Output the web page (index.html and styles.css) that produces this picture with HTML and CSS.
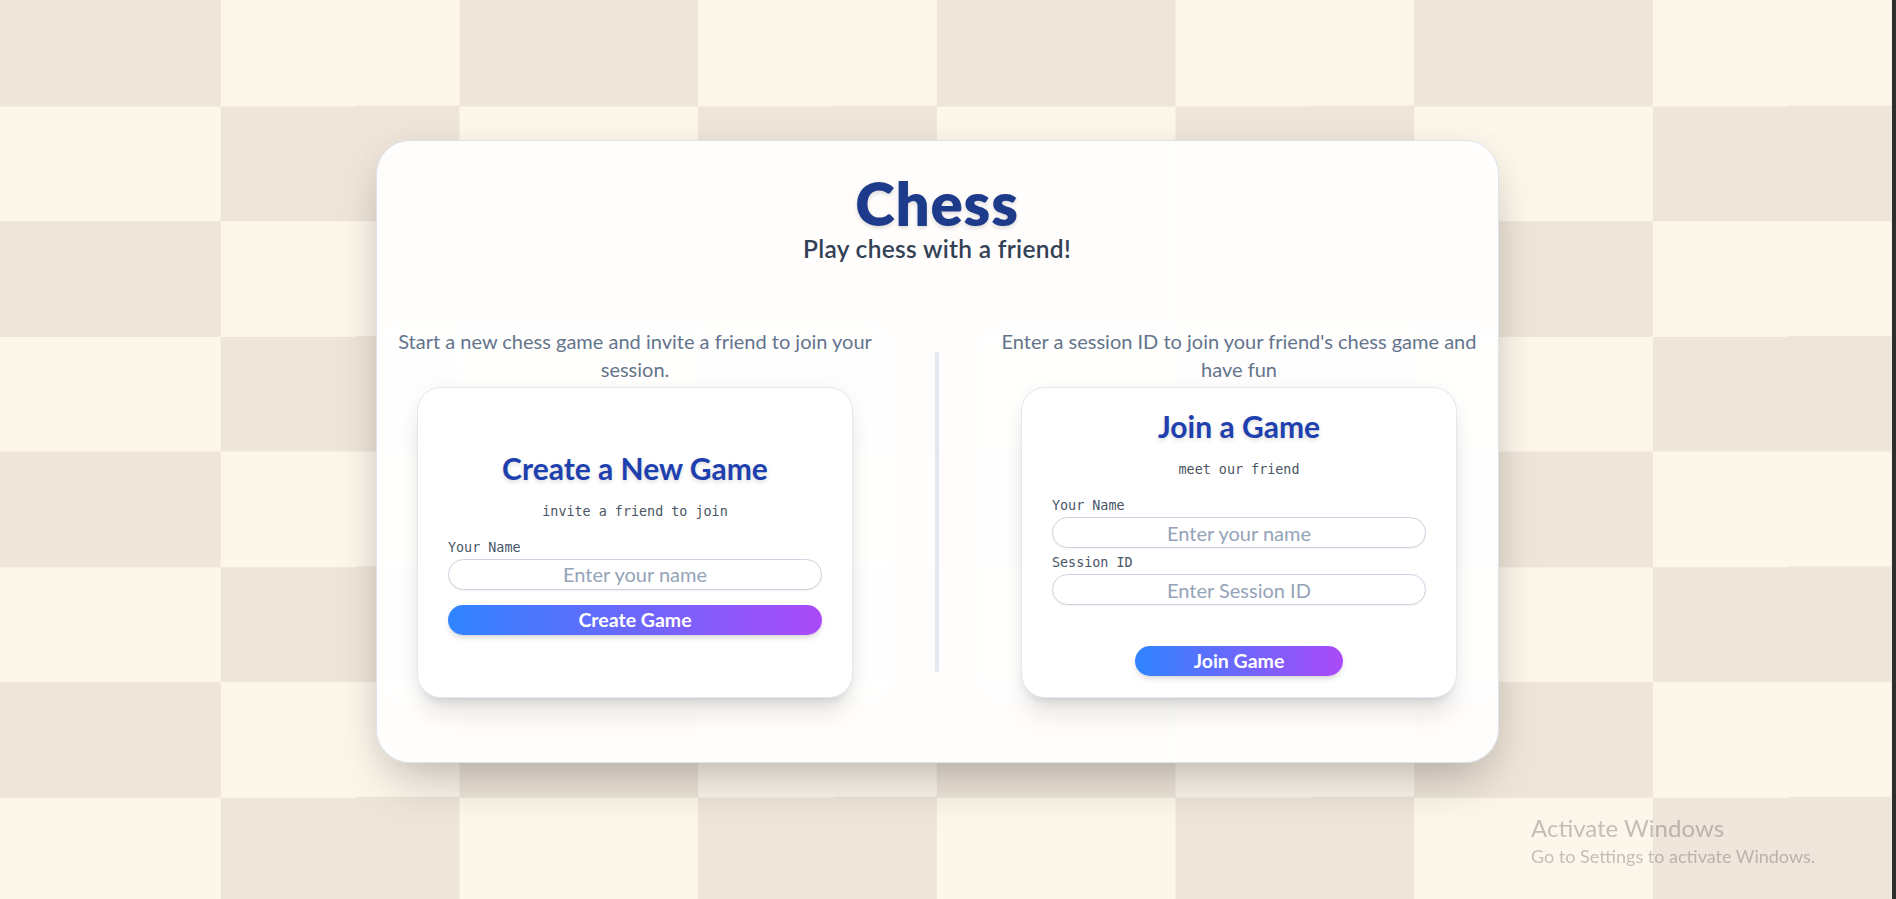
FILE: index.html
```html
<!DOCTYPE html>
<html lang="en">
<head>
<meta charset="utf-8">
<title>Chess</title>
<link rel="stylesheet" href="styles.css">
</head>
<body>
<main class="page">
  <section class="shell">
    <header class="hero">
      <h1 class="title">Chess</h1>
      <p class="tagline">Play chess with a friend!</p>
    </header>
    <div class="columns">
      <div class="col">
        <p class="col-desc">Start a new chess game and invite a friend to join your session.</p>
        <div class="card">
          <h2 class="card-title">Create a New Game</h2>
          <p class="card-sub">invite a friend to join</p>
          <label class="field-label">Your Name</label>
          <input class="field" type="text" placeholder="Enter your name">
          <button class="btn btn-full">Create Game</button>
        </div>
      </div>
      <div class="divider"></div>
      <div class="col">
        <p class="col-desc">Enter a session ID to join your friend's chess game and have fun</p>
        <div class="card">
          <h2 class="card-title">Join a Game</h2>
          <p class="card-sub">meet our friend</p>
          <label class="field-label">Your Name</label>
          <input class="field" type="text" placeholder="Enter your name">
          <label class="field-label field-label-tight">Session ID</label>
          <input class="field" type="text" placeholder="Enter Session ID">
          <button class="btn btn-join">Join Game</button>
        </div>
      </div>
    </div>
  </section>
</main>
<div class="watermark">
  <div class="wm-title">Activate Windows</div>
  <div class="wm-sub">Go to Settings to activate Windows.</div>
</div>
</body>
</html>
```
FILE: styles.css
```css
html {
  background: #2f2f2f;
}
body {
  margin: 0;
  width: calc(100% - 4px);
  min-height: 100vh;
  font-family: Lato, "Segoe UI", "Liberation Sans", Arial, sans-serif;
  background: repeating-conic-gradient(#fdf6eb 0 25%, #efe5da 0 50%) -18px -9.2px / 477.4px 230.4px;
}
.page {
  display: flex;
  justify-content: center;
  padding: 140px 18px 0 0;
}
.shell {
  width: 1123px;
  box-sizing: border-box;
  padding: 34px 0.5px 64px;
  background: rgba(255,255,255,0.9);
  border: 1px solid #dbe3ee;
  border-radius: 34px;
  box-shadow: 0 25px 50px -12px rgba(0,0,0,0.25), 0 0 30px rgba(0,0,0,0.04);
}
.hero {
  text-align: center;
}
.title {
  margin: 0;
  font-size: 60px;
  line-height: 57.6px;
  font-weight: 800;
  letter-spacing: 0.8px;
  color: #1e3a8a;
  text-shadow: 0 2px 4px rgba(0,0,0,0.15);
}
.tagline {
  margin: 0;
  font-size: 24.5px;
  line-height: 32px;
  font-weight: 600;
  letter-spacing: 0.3px;
  color: #334155;
}
.columns {
  display: flex;
  margin-top: 62px;
}
.col {
  flex: 1;
  padding: 0 16px;
  background: rgba(255,255,255,0.6);
  border-radius: 24px;
}
.divider {
  width: 4px;
  height: 320px;
  align-self: center;
  margin: 0 42px;
  background: #e2e8f0;
  border-radius: 2px;
}
.col-desc {
  margin: 0 0 4px;
  font-size: 20px;
  line-height: 28px;
  color: #64748b;
  text-align: center;
}
.card {
  width: 436px;
  height: 311px;
  margin: 0 auto;
  box-sizing: border-box;
  padding: 0 30px;
  display: flex;
  flex-direction: column;
  justify-content: center;
  background: #fff;
  border: 1px solid #e2e8f0;
  border-radius: 24px;
  box-shadow: 0 20px 25px -5px rgba(0,0,0,0.1), 0 8px 10px -6px rgba(0,0,0,0.1), 0 0 20px rgba(0,0,0,0.04);
}
.card-title {
  margin: 0;
  font-size: 30px;
  line-height: 36px;
  font-weight: 700;
  color: #1e40af;
  text-align: center;
  text-shadow: 0 2px 4px rgba(0,0,0,0.15);
}
.card-sub {
  margin: 16px 0 0;
  font-family: "DejaVu Sans Mono", monospace;
  font-size: 13.4px;
  line-height: 20px;
  color: #4b5563;
  text-align: center;
}
.field-label {
  display: block;
  margin-top: 16px;
  font-family: "DejaVu Sans Mono", monospace;
  font-size: 13.4px;
  line-height: 20px;
  color: #475569;
}
.field-label-tight {
  margin-top: 5px;
}
.field {
  display: block;
  width: 100%;
  height: 31px;
  margin-top: 1px;
  box-sizing: border-box;
  padding: 0 16px;
  border: 1.5px solid #cbd5e1;
  border-radius: 9999px;
  font-family: inherit;
  font-size: 20px;
  text-align: center;
  color: #1f2937;
  background: #fff;
  box-shadow: 0 1px 2px rgba(0,0,0,0.06);
  outline: none;
}
.field::placeholder {
  color: #94a3b8;
}
.btn {
  height: 30px;
  border: none;
  border-radius: 9999px;
  background: linear-gradient(90deg, #2f84ff, #ab4af8);
  color: #fff;
  font-family: inherit;
  font-size: 19.5px;
  font-weight: 700;
  line-height: 30px;
  padding: 0;
  box-shadow: 0 4px 6px -1px rgba(0,0,0,0.12), 0 2px 4px -2px rgba(0,0,0,0.1);
  cursor: pointer;
}
.btn-full {
  width: 100%;
  margin-top: 15px;
}
.btn-join {
  align-self: center;
  margin-top: 41px;
  padding: 0 59px;
}
.watermark {
  position: fixed;
  left: 1531px;
  top: 812px;
  color: rgba(90,85,80,0.35);
}
.wm-title {
  font-size: 24px;
  line-height: 32px;
}
.wm-sub {
  font-size: 18px;
  line-height: 24px;
}
```
